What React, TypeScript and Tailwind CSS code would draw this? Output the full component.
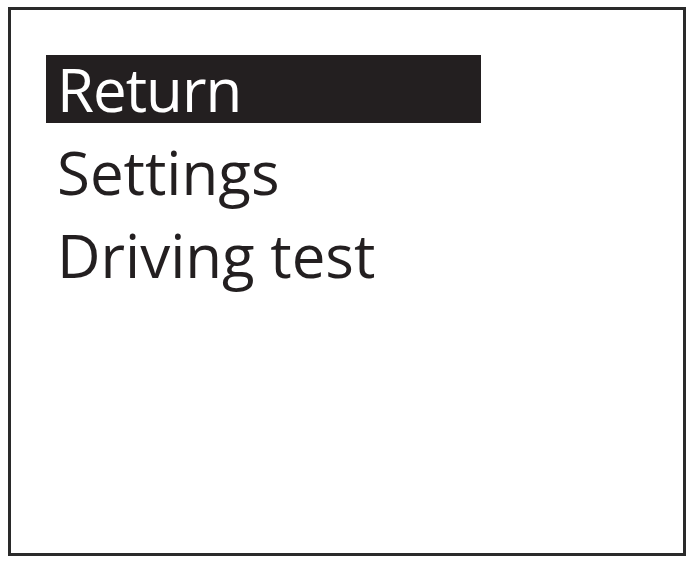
import React from 'react';

const items = ['Return', 'Settings', 'Driving test'];

export default function App() {
  const selected = 0;

  return (
    <div className="w-[690px] h-[562px] bg-white pl-[8px] pt-[7px]" style={{ fontFamily: '"Open Sans", "Noto Sans", sans-serif' }}>
      <div className="w-[678px] h-[549px] border-[3px] border-[#2a2a2a] pl-[35px] pt-[45px]">
        <div className="flex flex-col gap-[15px]">
          {items.map((item, i) => (
            <div
              key={item}
              className={`w-[435px] h-[68px] pl-[11px] text-[60px] leading-[68px] whitespace-nowrap ${
                i === selected ? 'bg-[#231f20] text-white tracking-[-1px]' : 'text-[#231f20]'
              }`}
            >
              {item}
            </div>
          ))}
        </div>
      </div>
    </div>
  );
}
